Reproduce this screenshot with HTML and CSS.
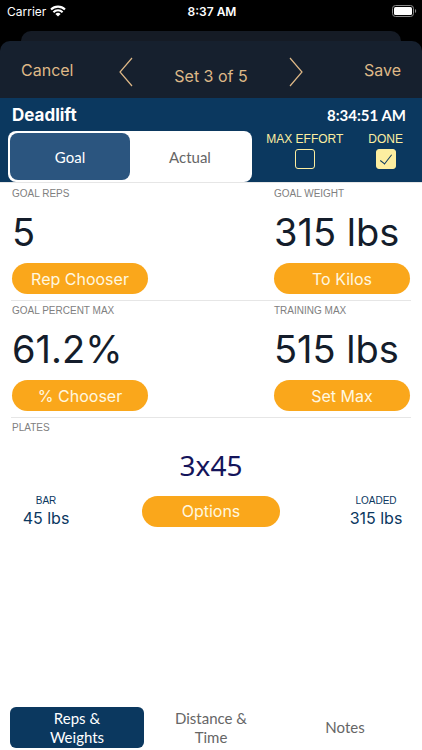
FILE: index.html
```html
<!DOCTYPE html>
<html lang="en">
<head>
    <meta charset="UTF-8">
    <meta name="viewport" content="width=device-width, initial-scale=1.0">
    <title>Deadlift</title>
    <link rel="stylesheet" href="styles.css">
</head>
<body>

    <div class="status-bar">
        <div class="carrier">
            <span>Carrier</span>
            <svg class="wifi" viewBox="0 0 16 12" width="16" height="12" fill="none" stroke="#fff" stroke-width="2.1">
                <path d="M1 4.5a10 10 0 0 1 14 0"/>
                <path d="M3.4 7.2a6.5 6.5 0 0 1 9.2 0"/>
                <path d="M8 11.6 5.4 9a3.7 3.7 0 0 1 5.2 0z" fill="#fff" stroke="none"/>
            </svg>
        </div>
        <div class="clock">8:37 AM</div>
        <svg class="battery" viewBox="0 0 25 12" width="25" height="12">
            <rect x="0.5" y="0.5" width="21" height="11" rx="3" fill="none" stroke="#8a8a8a"/>
            <rect x="2" y="2" width="18" height="8" rx="1.5" fill="#fff"/>
            <path d="M23 4c1.600.5 1.600 3.500 0 4z" fill="#8a8a8a"/>
        </svg>
    </div>

    <div class="back-sheet"></div>

    <header class="nav-bar">
        <button class="nav-text" type="button">Cancel</button>
        <div class="set-picker">
            <button class="arrow" type="button" aria-label="Previous set">
                <svg viewBox="0 0 14 30" width="14" height="30"><path d="M13 1 1 15l12 14"/></svg>
            </button>
            <span class="set-title">Set 3 of 5</span>
            <button class="arrow" type="button" aria-label="Next set">
                <svg viewBox="0 0 14 30" width="14" height="30"><path d="M1 1l12 14L1 29"/></svg>
            </button>
        </div>
        <button class="nav-text nav-save" type="button">Save</button>
    </header>

    <section class="exercise">
        <div class="exercise-top">
            <h1>Deadlift</h1>
            <time>8:34:51 AM</time>
        </div>
        <div class="exercise-bottom">
            <div class="segment">
                <button class="segment-item active" type="button">Goal</button>
                <button class="segment-item" type="button">Actual</button>
            </div>
            <div class="checks">
                <label class="check">MAX EFFORT<input type="checkbox"></label>
                <label class="check">DONE<input type="checkbox" checked></label>
            </div>
        </div>
    </section>

    <main>
        <section class="row">
            <div class="metric">
                <h2>GOAL REPS</h2>
                <div class="value">5</div>
                <button class="pill" type="button">Rep Chooser</button>
            </div>
            <div class="metric">
                <h2>GOAL WEIGHT</h2>
                <div class="value">315 lbs</div>
                <button class="pill" type="button">To Kilos</button>
            </div>
        </section>

        <section class="row">
            <div class="metric">
                <h2>GOAL PERCENT MAX</h2>
                <div class="value">61.2%</div>
                <button class="pill" type="button">% Chooser</button>
            </div>
            <div class="metric">
                <h2>TRAINING MAX</h2>
                <div class="value">515 lbs</div>
                <button class="pill" type="button">Set Max</button>
            </div>
        </section>

        <section class="plates">
            <h2>PLATES</h2>
            <div class="plate-list">3x45</div>
            <div class="plate-info">
                <div class="load">
                    <span class="load-label">BAR</span>
                    <span class="load-value">45 lbs</span>
                </div>
                <button class="pill" type="button">Options</button>
                <div class="load">
                    <span class="load-label">LOADED</span>
                    <span class="load-value">315 lbs</span>
                </div>
            </div>
        </section>
    </main>

    <nav class="tabs">
        <button class="tab active" type="button">Reps &amp;<br>Weights</button>
        <button class="tab" type="button">Distance &amp;<br>Time</button>
        <button class="tab" type="button">Notes</button>
    </nav>

</body>
</html>
```
FILE: styles.css
```css
* {
    box-sizing: border-box;
}
body {
    margin: 0;
    min-height: 100vh;
    display: flex;
    flex-direction: column;
    font-family: Inter, "Liberation Sans", sans-serif;
    background: linear-gradient(#000 98px, #fff 98px);
    color: #141d2b;
}
button {
    margin: 0;
    padding: 0;
    border: 0;
    background: none;
    font: inherit;
    color: inherit;
}
h1, h2 {
    margin: 0;
}

/* status bar */
.status-bar {
    display: grid;
    grid-template-columns: 1fr auto 1fr;
    align-items: center;
    height: 31px;
    padding: 0 5px 9px 7px;
    color: #fff;
    font-size: 12px;
}
.carrier {
    display: flex;
    align-items: center;
    gap: 4px;
}
.clock {
    font-weight: 600;
}
.battery {
    justify-self: end;
}

/* sheets */
.back-sheet {
    height: 10px;
    margin: 0 21px;
    border-radius: 10px 10px 0 0;
    background: #151b25;
}
.nav-bar {
    display: flex;
    justify-content: space-between;
    height: 57px;
    padding: 0 21px;
    border-radius: 10px 10px 0 0;
    background: #16202e;
    color: #deb887;
    font-size: 16px;
}
.nav-text {
    flex: 1;
    height: 57px;
    text-align: left;
}
.nav-save {
    text-align: right;
}
.set-picker {
    display: flex;
    align-items: center;
    gap: 41px;
    padding-top: 4px;
}
.set-title {
    padding-top: 8px;
}
.arrow svg {
    display: block;
    fill: none;
    stroke: #deb887;
    stroke-width: 1.2;
}

/* exercise header */
.exercise {
    background: #0b385f;
    color: #fff;
}
.exercise-top {
    display: flex;
    justify-content: space-between;
    align-items: center;
    height: 33px;
    padding: 0 16px 0 12px;
}
.exercise-top h1 {
    font-size: 17px;
    font-weight: 700;
}
.exercise-top time {
    font: 700 15px Lato, sans-serif;
}
.exercise-bottom {
    display: flex;
    justify-content: space-between;
    padding: 0 19px 0 8px;
}
.segment {
    display: flex;
    flex: 0 1 244px;
    height: 51px;
    padding: 2px;
    border-radius: 8px;
    background: #fff;
}
.segment-item {
    flex: 1;
    border-radius: 8px;
    font: 15px Lato, sans-serif;
    color: #666;
}
.segment-item.active {
    background: #2b557f;
    color: #fff;
}
.checks {
    display: flex;
    gap: 25px;
}
.check {
    display: flex;
    flex-direction: column;
    align-items: center;
    font: 12px/16px "Liberation Sans", sans-serif;
    color: #fdeea0;
}
.check input {
    appearance: none;
    width: 20px;
    height: 20px;
    margin: 2px 0 0;
    border: 1px solid #fdeea0;
    border-radius: 3px;
}
.check input:checked {
    background: #fdeea0;
}
.check input:checked::after {
    content: "";
    display: block;
    width: 5px;
    height: 11px;
    margin: 2px 0 0 6px;
    border: solid #0b385f;
    border-width: 0 1px 1px 0;
    transform: rotate(38deg);
}

/* metrics */
main {
    flex: 1;
    padding: 1px 11px 0;
    border-top: 1px solid #e6e6e6;
}
h2 {
    font: 10px/20px "Liberation Sans", sans-serif;
    color: #808080;
}
.row {
    display: grid;
    grid-template-columns: 136px 136px;
    justify-content: space-between;
    padding: 0 1px 6px;
    border-bottom: 1px solid #e6e6e6;
}
.value {
    font-size: 38px;
    line-height: 56px;
    white-space: nowrap;
}
.pill {
    display: block;
    width: 136px;
    height: 31px;
    margin-top: 3px;
    border-radius: 16px;
    background: #faa71b;
    color: #fff8e0;
    font-size: 16px;
}

/* plates */
.plates h2 {
    padding-left: 1px;
}
.plate-list {
    padding-bottom: 2px;
    font: 28px/54px "Noto Sans", sans-serif;
    text-align: center;
    color: #14145a;
}
.plate-info {
    display: flex;
    justify-content: space-between;
    align-items: center;
}
.plate-info .pill {
    width: 138px;
    margin-top: 0;
}
.load {
    display: flex;
    flex-direction: column;
    width: 70px;
    text-align: center;
    color: #0b385f;
}
.load-label {
    font: 10px/14px "Liberation Sans", sans-serif;
}
.load-value {
    font-size: 16px;
    line-height: 20px;
}

/* bottom tabs */
.tabs {
    display: flex;
    padding: 0 10px 2px;
}
.tab {
    flex: 1;
    height: 41px;
    border-radius: 6px;
    font: 15px/19px Lato, sans-serif;
    color: #666;
}
.tab.active {
    background: #0b385f;
    color: #fff;
}
```
